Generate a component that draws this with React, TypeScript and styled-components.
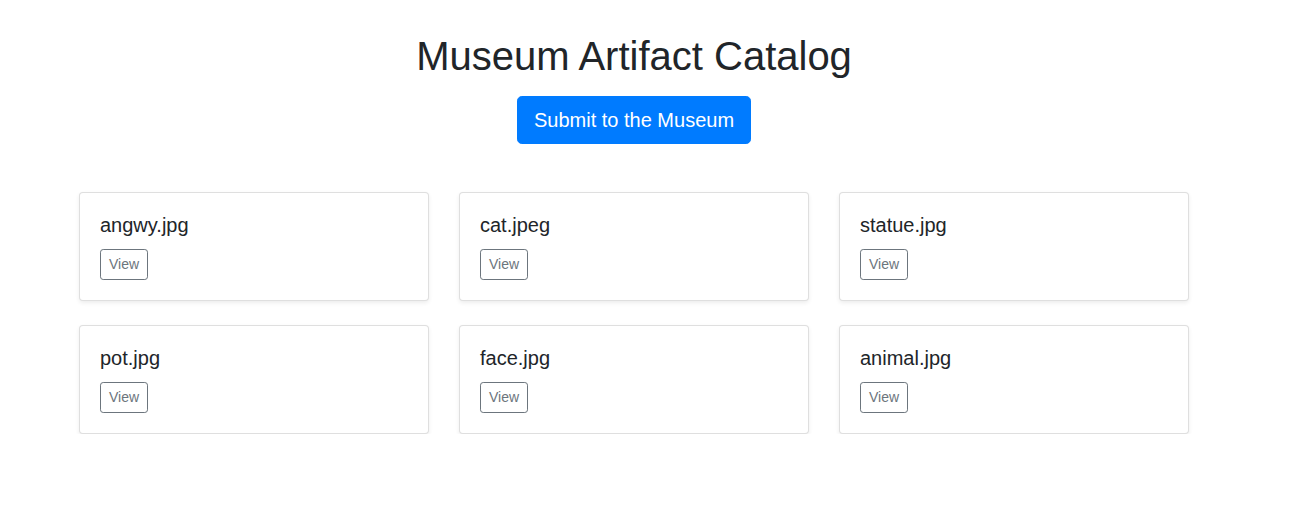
import React from "react";
import styled, { createGlobalStyle } from "styled-components";

const GlobalStyle = createGlobalStyle`
  * { box-sizing: border-box; }
  body {
    margin: 0;
    background: #fff;
    color: #212529;
    font-family: "Liberation Sans", Arial, sans-serif;
    font-size: 16px;
    line-height: 1.5;
  }
`;

const Page = styled.div`
  padding-right: 35px;
`;

const Container = styled.div`
  max-width: 1140px;
  margin: 0 auto;
  padding: 32px 15px 0;
  display: flex;
  flex-direction: column;
  align-items: center;
`;

const Title = styled.h1`
  margin: 0 0 16px;
  font-size: 40px;
  font-weight: 400;
  line-height: 1.2;
  color: #212529;
`;

const SubmitButton = styled.button`
  font-family: inherit;
  font-size: 20px;
  line-height: 1.5;
  padding: 8px 16px;
  color: #fff;
  background: #007bff;
  border: 1px solid #007bff;
  border-radius: 4.8px;
  margin-bottom: 48px;
  cursor: pointer;
`;

const Grid = styled.div`
  align-self: stretch;
  display: grid;
  grid-template-columns: repeat(3, 1fr);
  column-gap: 30px;
  row-gap: 24px;
`;

const Card = styled.div`
  background: #fff;
  border: 1px solid rgba(0, 0, 0, 0.125);
  border-radius: 4px;
  box-shadow: 0 2px 4px rgba(0, 0, 0, 0.075);
  padding: 20px;
`;

const CardTitle = styled.h5`
  margin: 0 0 12px;
  font-size: 20px;
  font-weight: 400;
  line-height: 1.2;
  color: #212529;
`;

const ViewButton = styled.button`
  font-family: inherit;
  font-size: 14px;
  line-height: 1.5;
  padding: 4px 8px;
  color: #6c757d;
  background: transparent;
  border: 1px solid #6c757d;
  border-radius: 3.2px;
  cursor: pointer;
`;

const items = ["angwy.jpg", "cat.jpeg", "statue.jpg", "pot.jpg", "face.jpg", "animal.jpg"];

export default function App() {
  return (
    <>
      <GlobalStyle />
      <Page>
        <Container>
          <Title>Museum Artifact Catalog</Title>
          <SubmitButton>Submit to the Museum</SubmitButton>
          <Grid>
            {items.map((name) => (
              <Card key={name}>
                <CardTitle>{name}</CardTitle>
                <ViewButton>View</ViewButton>
              </Card>
            ))}
          </Grid>
        </Container>
      </Page>
    </>
  );
}
